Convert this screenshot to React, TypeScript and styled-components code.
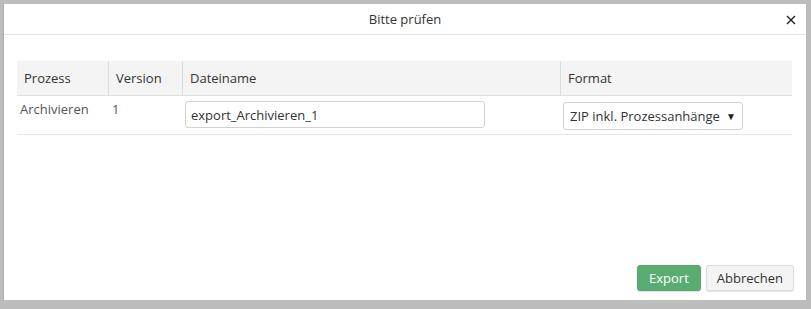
import React from "react";
import styled, { createGlobalStyle } from "styled-components";

const Global = createGlobalStyle`
  html, body { margin: 0; padding: 0; background: #bcbcbc; }
  body { font-family: "Open Sans", "Liberation Sans", sans-serif; font-size: 13px; color: #333; }
  * { box-sizing: border-box; }
`;

const Page = styled.div`
  width: 811px;
  height: 309px;
  padding: 4px 5px 9px 4px;
`;

const Dialog = styled.div`
  width: 802px;
  height: 296px;
  background: #fff;
  box-shadow: -1px 0 0 #acacac;
  display: flex;
  flex-direction: column;
`;

const Header = styled.div`
  height: 31px;
  border-bottom: 1px solid #e3e3e3;
  display: flex;
  align-items: center;
  justify-content: center;
  position: relative;
`;

const Title = styled.div`
  font-size: 13px;
  color: #333;
  line-height: 18px;
`;

const Close = styled.button`
  position: absolute;
  right: 10px;
  top: 10px;
  width: 11px;
  height: 11px;
  border: 0;
  padding: 0;
  background: transparent;
  display: flex;
  align-items: center;
  justify-content: center;
`;

const Body = styled.div`
  flex: 1;
  padding: 26px 14px 0 13px;
`;

const Table = styled.div`
  display: grid;
  grid-template-columns: 91px 74px 378px 232px;
  width: 775px;
`;

const HeadCell = styled.div<{ $first?: boolean }>`
  background: #f4f4f4;
  height: 35px;
  border-bottom: 1px solid #dedede;
  border-left: ${(p) => (p.$first ? "none" : "1px solid #dcdcdc")};
  padding: 0 7px;
  display: flex;
  align-items: center;
  color: #333;
  font-size: 13px;
`;

const Cell = styled.div<{ $pad?: number }>`
  height: 39px;
  border-bottom: 1px solid #e6e6e6;
  padding: 4px ${(p) => p.$pad ?? 3}px 0;
  color: #555;
  font-size: 13px;
  line-height: 18px;
`;

const Input = styled.input`
  width: 300px;
  height: 27px;
  margin-top: 1px;
  border: 1px solid #d2d2d2;
  border-radius: 3px;
  padding: 0 5px;
  font-family: "Open Sans", "Liberation Sans", sans-serif;
  font-size: 13px;
  color: #333;
  outline: none;
`;

const Select = styled.div`
  width: 180px;
  height: 28px;
  margin-top: 2px;
  border: 1px solid #d2d2d2;
  border-radius: 3px;
  padding: 0 6px;
  display: flex;
  align-items: center;
  justify-content: space-between;
  color: #333;
  font-size: 13px;
`;

const Arrow = styled.span`
  font-size: 10px;
  color: #222;
  margin-right: 0;
`;

const Footer = styled.div`
  display: flex;
  justify-content: flex-end;
  gap: 5px;
  padding: 0 12px 9px 0;
`;

const Button = styled.button<{ $primary?: boolean }>`
  height: 26px;
  padding: 0 ${(p) => (p.$primary ? 11 : 10)}px;
  border-radius: 3px;
  font-family: "Open Sans", "Liberation Sans", sans-serif;
  font-size: 13px;
  border: 1px solid ${(p) => (p.$primary ? "#54a66d" : "#dcdcdc")};
  background: ${(p) => (p.$primary ? "#5aad72" : "#f4f4f4")};
  color: ${(p) => (p.$primary ? "#fff" : "#333")};
  box-shadow: 0 1px 1px rgba(0, 0, 0, 0.12);
`;

export default function App() {
  return (
    <Page>
      <Global />
      <Dialog>
        <Header>
          <Title>Bitte prüfen</Title>
          <Close aria-label="Schließen">
            <svg width="10" height="10" viewBox="0 0 10 10">
              <path d="M1 1 L9 9 M9 1 L1 9" stroke="#222" strokeWidth="1.4" />
            </svg>
          </Close>
        </Header>
        <Body>
          <Table>
            <HeadCell $first>Prozess</HeadCell>
            <HeadCell>Version</HeadCell>
            <HeadCell>Dateiname</HeadCell>
            <HeadCell>Format</HeadCell>
            <Cell>Archivieren</Cell>
            <Cell $pad={4}>1</Cell>
            <Cell>
              <Input defaultValue="export_Archivieren_1" />
            </Cell>
            <Cell>
              <Select>
                <span>ZIP inkl. Prozessanhänge</span>
                <Arrow>▼</Arrow>
              </Select>
            </Cell>
          </Table>
        </Body>
        <Footer>
          <Button $primary>Export</Button>
          <Button>Abbrechen</Button>
        </Footer>
      </Dialog>
    </Page>
  );
}
